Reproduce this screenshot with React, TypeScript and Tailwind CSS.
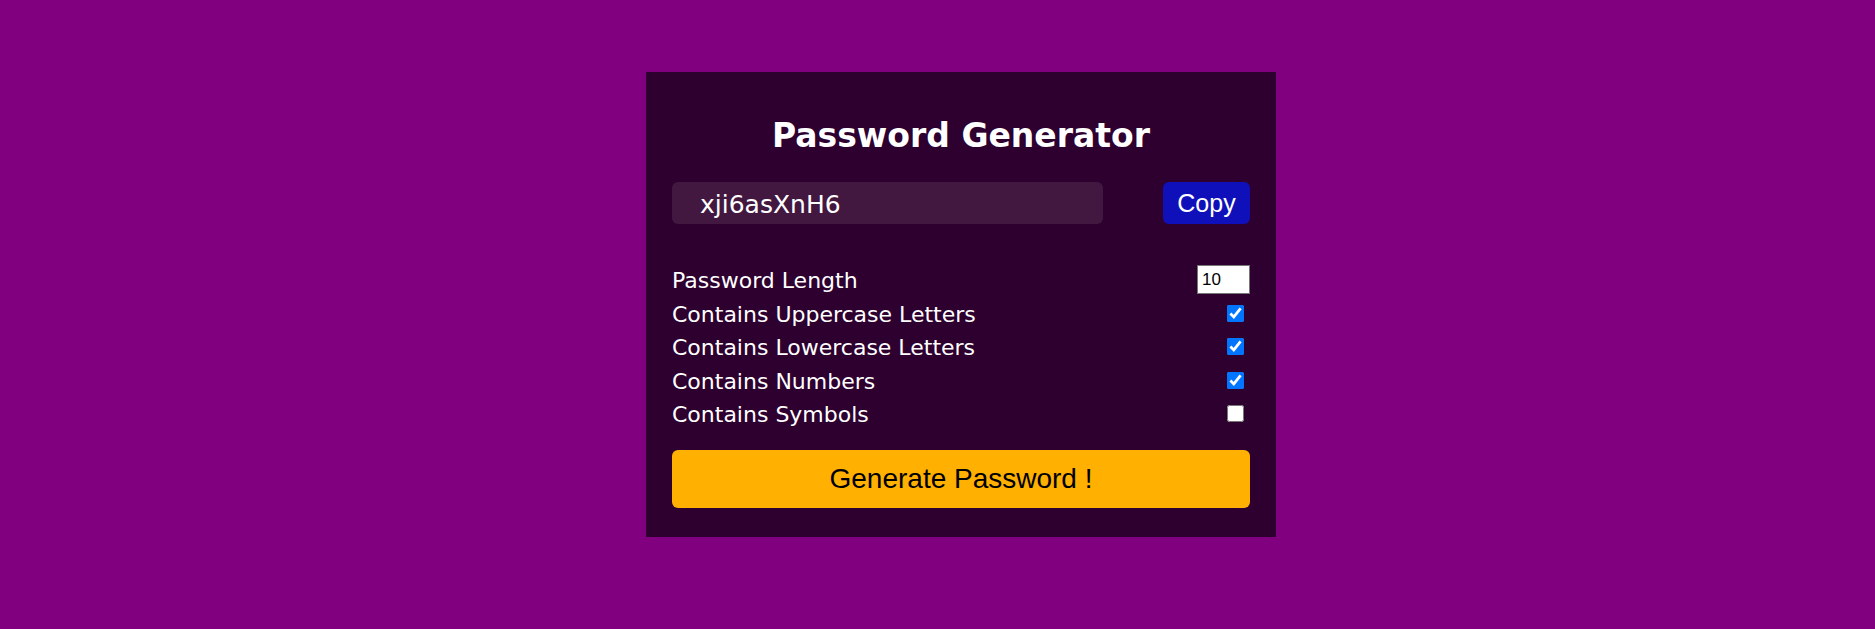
import React, { useState } from "react";

export default function App() {
  const [upper, setUpper] = useState(true);
  const [lower, setLower] = useState(true);
  const [nums, setNums] = useState(true);
  const [syms, setSyms] = useState(false);

  const rows: [string, boolean, (v: boolean) => void][] = [
    ["Contains Uppercase Letters", upper, setUpper],
    ["Contains Lowercase Letters", lower, setLower],
    ["Contains Numbers", nums, setNums],
    ["Contains Symbols", syms, setSyms],
  ];

  return (
    <div className="w-full h-[629px] bg-[#800080] flex justify-center items-start pt-[72px] pl-[47px]">
      <div
        className="w-[630px] bg-[#2d0030] px-[26px] pt-[26px] pb-[29px] flex flex-col"
        style={{ fontFamily: '"DejaVu Sans", Verdana, sans-serif' }}
      >
        <h1 className="text-white text-[33px] font-bold leading-[40px] text-center mt-[18px]">
          Password Generator
        </h1>
        <div className="flex items-center justify-between mt-[26px]">
          <div className="w-[431px] h-[42px] rounded-[6px] bg-[#421840] flex items-center pl-[28px] pt-[3px] text-white text-[25px]">
            xji6asXnH6
          </div>
          <button
            className="w-[87px] h-[42px] rounded-[6px] bg-[#0f10b9] text-white text-[25px] pt-[1px]"
            style={{ fontFamily: '"Liberation Sans", Arial, sans-serif' }}
          >
            Copy
          </button>
        </div>
        <div className="flex flex-col mt-[39px] text-white text-[22px]">
          <div className="flex items-center justify-between h-[33.5px]">
            <span className="pt-[2px]">Password Length</span>
            <input
              type="number"
              defaultValue={10}
              className="w-[53px] h-[29px] bg-white border border-[#767676] text-black text-[17px] pl-[4px]"
              style={{ fontFamily: '"Liberation Sans", Arial, sans-serif' }}
            />
          </div>
          {rows.map(([label, val, set]) => (
            <div key={label} className="flex items-center justify-between h-[33.5px]">
              <span className="pt-[2px]">{label}</span>
              <input
                type="checkbox"
                checked={val}
                onChange={(e) => set(e.target.checked)}
                className="w-[17px] h-[17px] mr-[6px] accent-[#0075ff]"
              />
            </div>
          ))}
        </div>
        <button
          className="mt-[19px] h-[58px] w-full rounded-[6px] bg-[#ffb000] text-black text-[28px]"
          style={{ fontFamily: '"Liberation Sans", Arial, sans-serif' }}
        >
          Generate Password !
        </button>
      </div>
    </div>
  );
}
